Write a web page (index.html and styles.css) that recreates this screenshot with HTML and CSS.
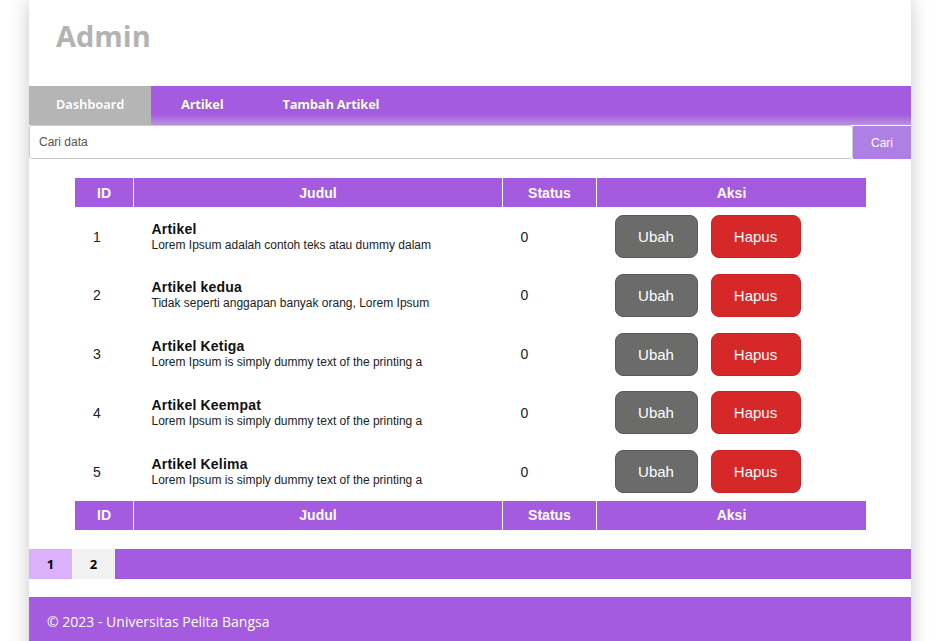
FILE: index.html
```html
<!DOCTYPE html>
<html lang="id">
<head>
<meta charset="utf-8">
<title>Admin</title>
<link rel="stylesheet" href="styles.css">
</head>
<body>
<div class="container">
  <header class="header"><h1>Admin</h1></header>
  <nav class="nav">
    <a class="nav-item active" href="#">Dashboard</a>
    <a class="nav-item" href="#">Artikel</a>
    <a class="nav-item" href="#">Tambah Artikel</a>
  </nav>
  <form class="search">
    <input class="search-input" type="text" placeholder="Cari data">
    <button class="search-btn" type="button">Cari</button>
  </form>
  <table class="table">
    <thead>
      <tr><th class="c-id">ID</th><th class="c-judul">Judul</th><th class="c-status">Status</th><th class="c-aksi">Aksi</th></tr>
    </thead>
    <tbody>
      <tr><td>1</td><td><b class="title">Artikel</b><p class="desc">Lorem Ipsum adalah contoh teks atau dummy dalam</p></td><td>0</td><td><span class="actions"><a class="btn btn-gray" href="#">Ubah</a><a class="btn btn-red" href="#">Hapus</a></span></td></tr>
      <tr><td>2</td><td><b class="title">Artikel kedua</b><p class="desc">Tidak seperti anggapan banyak orang, Lorem Ipsum</p></td><td>0</td><td><span class="actions"><a class="btn btn-gray" href="#">Ubah</a><a class="btn btn-red" href="#">Hapus</a></span></td></tr>
      <tr><td>3</td><td><b class="title">Artikel Ketiga</b><p class="desc">Lorem Ipsum is simply dummy text of the printing a</p></td><td>0</td><td><span class="actions"><a class="btn btn-gray" href="#">Ubah</a><a class="btn btn-red" href="#">Hapus</a></span></td></tr>
      <tr><td>4</td><td><b class="title">Artikel Keempat</b><p class="desc">Lorem Ipsum is simply dummy text of the printing a</p></td><td>0</td><td><span class="actions"><a class="btn btn-gray" href="#">Ubah</a><a class="btn btn-red" href="#">Hapus</a></span></td></tr>
      <tr><td>5</td><td><b class="title">Artikel Kelima</b><p class="desc">Lorem Ipsum is simply dummy text of the printing a</p></td><td>0</td><td><span class="actions"><a class="btn btn-gray" href="#">Ubah</a><a class="btn btn-red" href="#">Hapus</a></span></td></tr>
    </tbody>
    <tfoot>
      <tr><th>ID</th><th>Judul</th><th>Status</th><th>Aksi</th></tr>
    </tfoot>
  </table>
  <div class="pagination">
    <a class="page active" href="#">1</a>
    <a class="page" href="#">2</a>
  </div>
  <footer class="footer">&copy; 2023 - Universitas Pelita Bangsa</footer>
</div>
</body>
</html>
```
FILE: styles.css
```css
html, body {
  margin: 0;
  padding: 0;
  background: #fff;
}
body {
  font-family: "Liberation Sans", Arial, sans-serif;
  overflow: hidden;
}
.container {
  width: 882px;
  margin-left: 29px;
  background: #fff;
  box-shadow: 0 0 18px rgba(0, 0, 0, 0.22);
  min-height: 700px;
}
.header {
  height: 86px;
  display: flex;
  align-items: center;
  padding: 0 27px;
  box-sizing: border-box;
}
.header h1 {
  margin: 0;
  font-family: "Open Sans", sans-serif;
  font-weight: 700;
  font-size: 29px;
  color: #b3b3b3;
  line-height: 1;
  margin-top: -16px;
}
.nav {
  display: flex;
  height: 39px;
  background: linear-gradient(to bottom, #a45bdf 0%, #a45bdf 72%, #b992dc 100%);
}
.nav-item {
  display: flex;
  align-items: center;
  padding: 0 29px 3px 30px;
  color: #fff;
  text-decoration: none;
  font-family: "Open Sans", sans-serif;
  font-weight: 700;
  font-size: 13px;
  letter-spacing: -0.25px;
  text-shadow: 0 0 1px rgba(0,0,0,0.25);
}
.nav-item.active {
  background: #b5b5b5;
  padding: 0 27px 3px;
  width: 68px;
  justify-content: center;
}
.search {
  display: flex;
  margin: 0;
  height: 34px;
}
.search-input {
  flex: 1;
  border: 1px solid #cccccc;
  border-radius: 3px;
  padding: 0 9px;
  font-family: "Liberation Sans", Arial, sans-serif;
  font-size: 12px;
  color: #555;
  outline: none;
  height: 34px;
  box-sizing: border-box;
}
.search-input::placeholder {
  color: #555;
}
.search-btn {
  width: 58px;
  border: none;
  background: #ae80e6;
  color: #fff;
  font-family: "Liberation Sans", Arial, sans-serif;
  font-size: 12px;
  padding: 0;
  margin-top: 1px;
  height: 33px;
}
.table {
  width: 791px;
  margin: 19px 0 0 46px;
  border-collapse: collapse;
}
.table th {
  background: #a45bdf;
  color: #fff;
  font-size: 14px;
  font-weight: 700;
  height: 29px;
  padding: 0;
  text-align: center;
  border-left: 1px solid #fff;
}
.table th:first-child {
  border-left: none;
}
.c-id { width: 58px; }
.c-judul { width: 368px; }
.c-status { width: 93px; }
.table td {
  padding: 8px 18px 7.75px;
  font-size: 14px;
  color: #222;
  vertical-align: middle;
  height: 43px;
  box-sizing: content-box;
}
.title {
  display: block;
  font-size: 14px;
  color: #111;
  line-height: 16px;
  letter-spacing: 0.2px;
}
.desc {
  margin: 1px 0 0;
  font-size: 12px;
  line-height: 15px;
  color: #222;
}
.actions {
  display: flex;
  gap: 13px;
}
.btn {
  display: inline-flex;
  align-items: center;
  justify-content: center;
  height: 43px;
  box-sizing: border-box;
  border-radius: 8px;
  color: #fff;
  font-size: 15px;
  text-decoration: none;
}
.btn-gray {
  width: 83px;
  background: #6b6c6a;
  border: 1px solid #5a5a5a;
}
.btn-red {
  width: 90px;
  background: #d62828;
  border: 1px solid #c82222;
}
.pagination {
  display: flex;
  margin-top: 19px;
  height: 30px;
  background: #a45bdf;
}
.page {
  width: 43px;
  display: flex;
  align-items: center;
  justify-content: center;
  color: #000;
  text-decoration: none;
  font-family: "Open Sans", sans-serif;
  font-weight: 700;
  font-size: 13px;
  background: #f2f2f2;
}
.page.active {
  background: #dcb1fc;
}
.footer {
  margin-top: 18px;
  background: #a45bdf;
  color: #fff;
  font-family: "Open Sans", sans-serif;
  font-size: 14px;
  padding: 15px 18px;
  height: 80px;
}
```
